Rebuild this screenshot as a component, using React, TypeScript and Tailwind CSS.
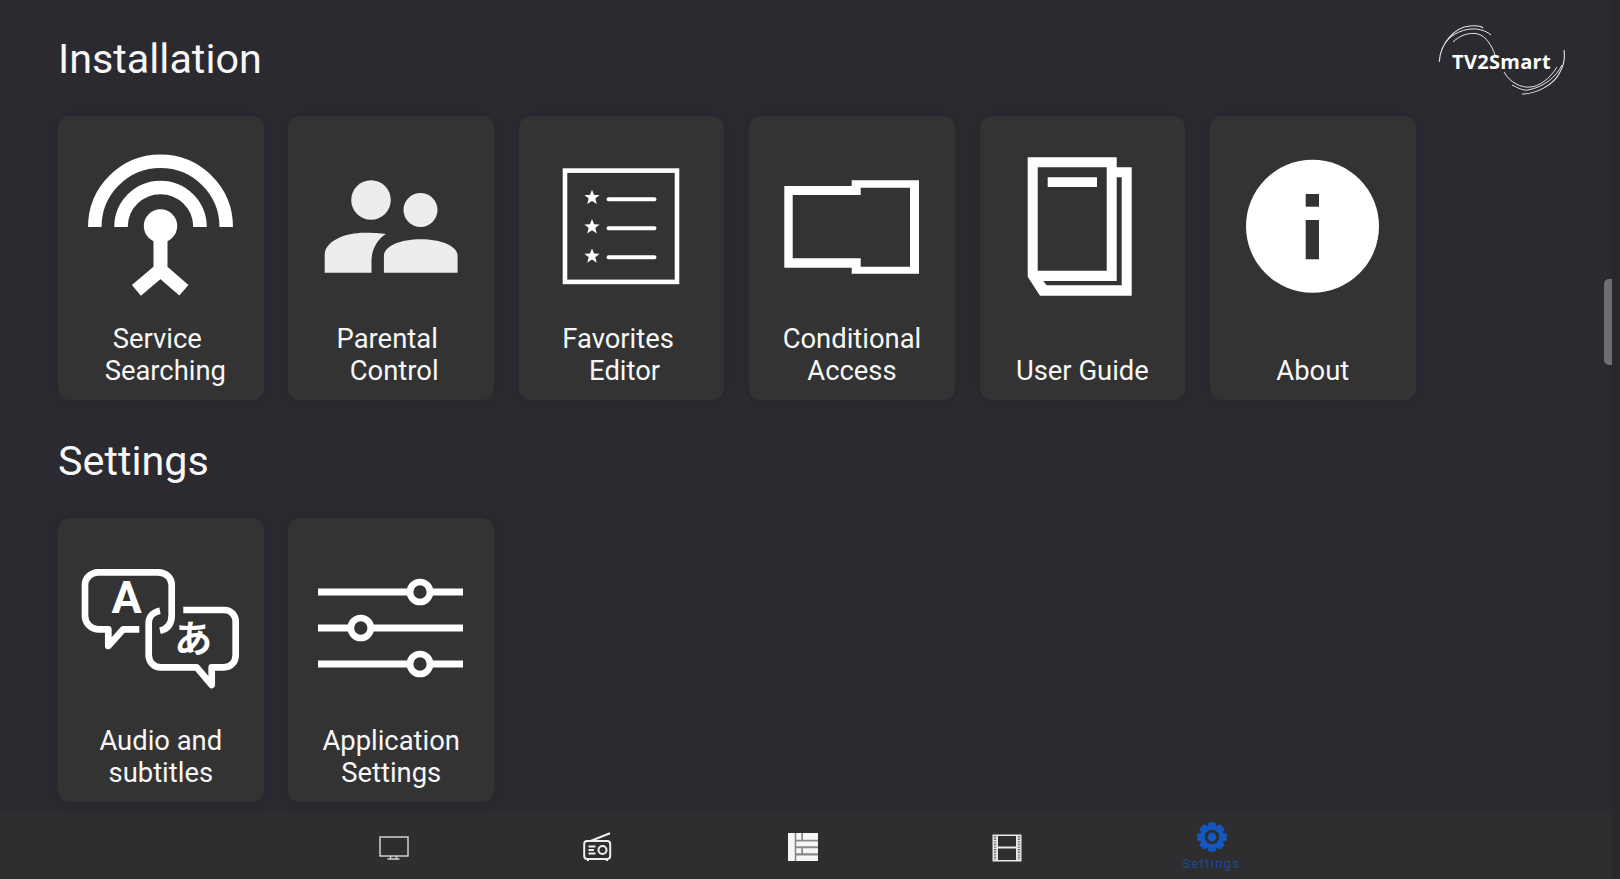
import React from "react";

const CARD = "#333334";

function AntennaIcon() {
  return (
    <svg viewBox="0 0 205 210" className="absolute inset-0 h-[210px] w-[205px]" fill="none" stroke="#fff" strokeWidth="13.5">
      <path d="M36.8 111 A65.7 65.7 0 0 1 168.2 111" />
      <path d="M63 111 A39.5 39.5 0 0 1 142 111" />
      <circle cx="102.5" cy="110" r="16.7" fill="#fff" stroke="none" />
      <path d="M102.5 125 V154 M78.4 174.3 L102.5 154 L125.9 174.3" strokeWidth="14" />
    </svg>
  );
}

function ParentalIcon() {
  return (
    <svg viewBox="0 0 205 210" className="absolute inset-0 h-[210px] w-[205px]" fill="#ecedef">
      <g transform="translate(0.8 0)">
        <circle cx="82.2" cy="84" r="19.8" />
        <circle cx="131.7" cy="94" r="17" />
        <path d="M35.9 156.7 V139 C35.9 125 56 116.7 76 116.7 C84 116.7 92 117 97 118 C88 124 82.7 134 82.7 145 V156.7 Z" />
        <path d="M95.1 156.7 V140 C95.1 130 112 123.3 132 123.3 C152 123.3 168.8 130 168.8 140 V156.7 Z" />
      </g>
    </svg>
  );
}

function Star({ x, y }: { x: number; y: number }) {
  return <path d={`M${x} ${y - 7.6} L${x + 2.1} ${y - 2.4} L${x + 7.6} ${y - 2.2} L${x + 3.3} ${y + 1.2} L${x + 4.8} ${y + 6.8} L${x} ${y + 3.6} L${x - 4.8} ${y + 6.8} L${x - 3.3} ${y + 1.2} L${x - 7.6} ${y - 2.2} L${x - 2.1} ${y - 2.4} Z`} fill="#fff" stroke="none" />;
}

function FavoritesIcon() {
  return (
    <svg viewBox="0 0 205 210" className="absolute inset-0 h-[210px] w-[205px]" fill="none" stroke="#fff">
      <rect x="46" y="54.6" width="112" height="111.3" strokeWidth="4.6" />
      <Star x={73} y={81.3} />
      <Star x={73} y={110.7} />
      <Star x={73} y={140} />
      <path d="M89.5 83.3 H135.5 M89.5 112.3 H135.5 M89.5 141.3 H135.5" strokeWidth="4" strokeLinecap="round" />
    </svg>
  );
}

function AccessIcon() {
  return (
    <svg viewBox="0 0 205 210" className="absolute inset-0 h-[210px] w-[205px]" fill="#fff">
      <path fillRule="evenodd" d="M35.3 70 H102.7 V64.3 H170 V157.7 H102.7 V151.7 H35.3 Z M43.7 79 V142.3 H111.7 V150.7 H161 V71.7 H111.7 V79 Z" />
    </svg>
  );
}

function GuideIcon() {
  return (
    <svg viewBox="0 0 205 210" className="absolute inset-0 h-[210px] w-[205px]" fill="#fff">
      <path fillRule="evenodd" d="M47.7 41.3 H136.7 V51.3 H151.7 V179.7 H60 L47.7 160.7 Z M57.7 51.3 V154.7 H126.7 V51.3 Z M136.7 61.3 V165 H63.3 L66.7 169.3 H141.7 V61.3 Z M67.7 61.3 H117 V71 H67.7 Z" />
    </svg>
  );
}

function AboutIcon() {
  return (
    <svg viewBox="0 0 205 210" className="absolute inset-0 h-[210px] w-[205px]">
      <circle cx="102.5" cy="110.3" r="66.5" fill="#fff" />
      <rect x="95.7" y="78" width="13.3" height="12.7" fill={CARD} />
      <rect x="95.7" y="104" width="13.3" height="39.3" fill={CARD} />
    </svg>
  );
}

function LanguageIcon() {
  return (
    <svg viewBox="0 0 205 210" className="absolute inset-0 h-[210px] w-[205px]" fill="none" stroke="#fff" strokeWidth="6.7" strokeLinecap="round" strokeLinejoin="round">
      <path d="M102 112.7 C110 111 113.7 105 113.7 97 V67 C113.7 60 108 54.3 100 54.3 H40 C33 54.3 27 60 27 67 V98 C27 105 33 111.3 40 111.3 H50.3 V128 L65.3 111.3 H81.3" strokeLinecap="butt" />
      <path d="M102 92.7 C95 94 90.7 99 90.7 105 V137 C90.7 144 96 149.3 103 149.3 H138.7 L153.7 167 V149.3 H166 C173 149.3 177.7 144 177.7 137 V104 C177.7 97 173 92 166 92 H125.3" strokeLinecap="butt" />
      <text x="68.7" y="95.3" textAnchor="middle" fill="#fff" stroke="none" fontSize="45" fontWeight="700" fontFamily="Roboto,sans-serif">A</text>
      <text x="135.3" y="134" textAnchor="middle" fill="#fff" stroke="none" fontSize="38" fontWeight="700" fontFamily="'Noto Sans CJK JP',sans-serif">あ</text>
    </svg>
  );
}

function SlidersIcon() {
  return (
    <svg viewBox="0 0 205 210" className="absolute inset-0 h-[210px] w-[205px]" fill="none" stroke="#fff">
      <path d="M30 74 H175 M30 110 H175 M30 146 H175" strokeWidth="7" />
      <circle cx="132" cy="74" r="10" strokeWidth="6.7" fill={CARD} />
      <circle cx="72.8" cy="110" r="10" strokeWidth="6.7" fill={CARD} />
      <circle cx="132" cy="146" r="10" strokeWidth="6.7" fill={CARD} />
    </svg>
  );
}

function TvIcon() {
  return (
    <svg width="30" height="24" viewBox="0 0 30 24" fill="none" stroke="#cfcfd1" strokeWidth="1.5">
      <rect x="1" y="1" width="28" height="19" />
      <path d="M11.5 20 V22.8 M17.5 20 V22.8 M8.5 23 H20.5" />
    </svg>
  );
}

function RadioIcon() {
  return (
    <svg width="30" height="30" viewBox="0 0 30 30" fill="none" stroke="#eeeeef" strokeWidth="2">
      <path d="M7.5 9 L27 1.2" />
      <rect x="1.2" y="9" width="26" height="18" rx="3" />
      <path d="M5.5 14.5 H12.5 M5.5 18 H11 M5.5 21.5 H12.5" />
      <circle cx="19.5" cy="18" r="4" />
      <path d="M5 27 V29 M24 27 V29" />
    </svg>
  );
}

function GuideListIcon() {
  return (
    <svg width="30" height="28" viewBox="0 0 30 28" fill="#f6f6f7">
      <rect width="30" height="28" fill="#88888a" />
      <path d="M0 0 H6.7 V28 H0 Z" />
      <path d="M8.3 0 H13.3 V6.7 H8.3 Z M15 0 H30 V6.7 H15 Z M8.3 8.5 H30 V13.3 H8.3 Z M8.3 15.2 H13.3 V20.3 H8.3 Z M15 15.2 H30 V20.3 H15 Z M8.3 22.4 H30 V28 H8.3 Z" />
    </svg>
  );
}

function FilmIcon() {
  return (
    <svg width="30" height="28" viewBox="0 0 30 28" fill="none">
      <rect x="0.5" y="0.5" width="29" height="27" fill="#e8e8ea" />
      <rect x="6" y="2" width="18" height="10.5" fill="#2e2e30" />
      <rect x="6" y="14.5" width="18" height="11.5" fill="#2e2e30" />
      <path d="M3 2 V26 M27 2 V26" stroke="#77777a" strokeWidth="2.4" strokeDasharray="1.4 1.2" />
    </svg>
  );
}

function GearIcon() {
  return (
    <svg width="30" height="30" viewBox="0 0 30 30">
      <g fill="#1557c0">
        <circle cx="15" cy="15" r="12" />
        {[0, 45, 90, 135, 180, 225, 270, 315].map((a) => (
          <rect key={a} x="11" y="0.3" width="8" height="7" rx="2" transform={`rotate(${a} 15 15)`} />
        ))}
      </g>
      <circle cx="15" cy="15" r="5.8" fill="none" stroke="#2e2e30" strokeWidth="3" />
    </svg>
  );
}

function Logo() {
  return (
    <div className="relative h-[72px] w-[130px]">
      <svg viewBox="0 0 130 72" className="absolute inset-0 h-full w-full" fill="none" stroke="#e6e6e8">
        <path d="M3.3 36.7 C4 20 18 2 34 1 C40 0.5 45 1 47 3" strokeWidth="1.1" />
        <path d="M9 18 C16 8 30 3 40 4 C46 4.5 52 7 55 10" strokeWidth="1" />
        <path d="M17 17 C24 10 34 7 42 9 C50 11 56 21 59 30" strokeWidth="1" />
        <path d="M128 25 C129 32 128 40 124 47 C118 60 100 69 86 69" strokeWidth="1.1" />
        <path d="M126 40 C120 52 108 62 92 65 C88 66 82 63 76 60" strokeWidth="1" />
        <path d="M121 42 C114 54 102 62 94 62 C86 63 74 58 68 47" strokeWidth="1" />
      </svg>
      <span className="absolute left-[16px] top-[25px] text-[20px] font-bold leading-[24px] tracking-[0.3px] text-white [font-family:'Open_Sans',sans-serif]">TV2Smart</span>
    </div>
  );
}

type Item = { top?: string; topShift?: string; bottom: string; bottomShift?: string; icon: React.ReactNode };

function Card({ top, bottom, icon, topShift, bottomShift }: Item) {
  return (
    <div className="relative flex h-[284px] w-[205.6px] flex-col justify-end rounded-[12px] bg-[#333334] pb-[13.5px] text-center text-[27.4px] leading-[32px] text-[#f7f7f7] shadow-[0_0_14px_rgba(0,0,0,0.12)]">
      {icon}
      {top && <span className={`block ${topShift ?? ""}`}>{top}</span>}
      <span className={`block ${bottomShift ?? ""}`}>{bottom}</span>
    </div>
  );
}

export default function App() {
  return (
    <div className="relative flex h-[879px] w-[1620px] overflow-hidden bg-[#2a2a30] [font-family:Roboto,sans-serif]">
      <div className="flex flex-1 flex-col">
        <main className="flex-1 pl-[58px] pr-[46px]">
          <div className="flex h-[116px] items-start justify-between">
            <h1 className="pt-[34px] text-[41.3px] font-normal leading-[50px] text-[#f7f7f7]">Installation</h1>
            <div className="pt-[25px]"><Logo /></div>
          </div>
          <div className="flex gap-[24.8px]">
            <Card top="Service" topShift="pr-[7px]" bottom="Searching" bottomShift="pl-[9px]" icon={<AntennaIcon />} />
            <Card top="Parental" topShift="pr-[8px]" bottom="Control" bottomShift="pl-[6px]" icon={<ParentalIcon />} />
            <Card top="Favorites" topShift="pr-[7px]" bottom="Editor" bottomShift="pl-[6px]" icon={<FavoritesIcon />} />
            <Card top="Conditional" bottom="Access" icon={<AccessIcon />} />
            <Card bottom="User Guide" icon={<GuideIcon />} />
            <Card bottom="About" icon={<AboutIcon />} />
          </div>
          <div className="flex h-[118px] items-start">
            <h2 className="pt-[36px] text-[41.3px] font-normal leading-[50px] text-[#f7f7f7]">Settings</h2>
          </div>
          <div className="flex gap-[24.8px]">
            <Card top="Audio and" bottom="subtitles" icon={<LanguageIcon />} />
            <Card top="Application" bottom="Settings" icon={<SlidersIcon />} />
          </div>
        </main>
        <nav className="flex h-[67px] items-start justify-center gap-[174.5px] bg-[#2e2e30] pr-[7px] pt-[10px]">
          <div className="flex h-[50px] w-[30px] items-center justify-center pt-[1px]"><TvIcon /></div>
          <div className="flex h-[50px] w-[30px] items-center justify-center"><RadioIcon /></div>
          <div className="flex h-[50px] w-[30px] items-center justify-center"><GuideListIcon /></div>
          <div className="flex h-[50px] w-[30px] items-center justify-center pt-[1px]"><FilmIcon /></div>
          <div className="flex h-[50px] w-[30px] flex-col items-center">
            <GearIcon />
            <span className="mt-[4px] text-[13px] leading-[15px] tracking-[1.3px] text-[#1a4a96]">Settings</span>
          </div>
        </nav>
      </div>
      <div className="w-[8px] bg-[#28282b]" />
      <div className="absolute left-[1604px] top-[279px] h-[86px] w-[8px] rounded-l-[5px] bg-[#6f6f73]" />
    </div>
  );
}
